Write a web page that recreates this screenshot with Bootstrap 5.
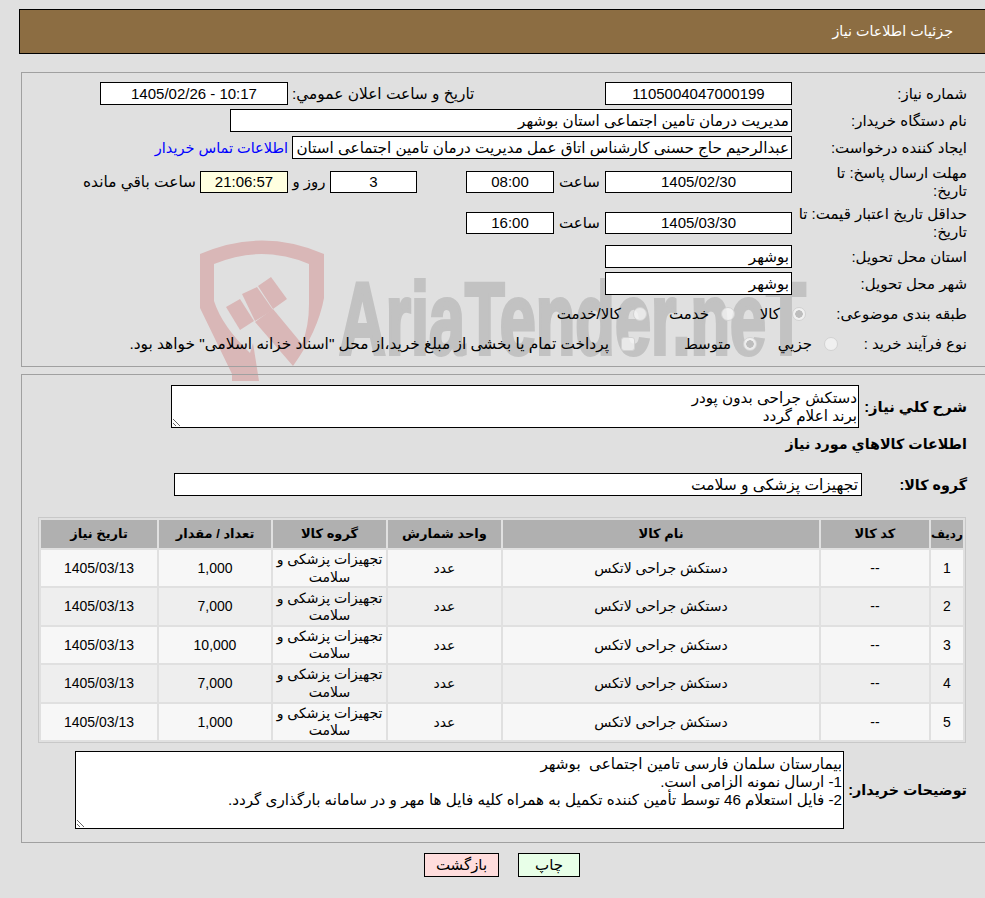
<!DOCTYPE html>
<html lang="fa" dir="rtl">

<head>
    <meta charset="UTF-8">
    <meta name="viewport" content="width=device-width, initial-scale=1">
    <title>جزئیات اطلاعات نیاز</title>
    <link href="https://cdn.jsdelivr.net/npm/bootstrap@5.3.0/dist/css/bootstrap.min.css" rel="stylesheet">
    <style>
        html, body { overflow-x: hidden; }
        body { background: #e0e0e0; color: #000; font: 15px/18px "Liberation Sans", "DejaVu Sans", sans-serif; height: 898px; overflow: hidden; }
        .page-wrap { position: relative; margin-left: 19px; margin-right: -3px; padding-top: 9px; }
        .water-shield { position: absolute; left: -19px; top: -9px; width: 985px; height: 420px; z-index: 0; }
        .water-text { position: absolute; left: 320px; top: 259px; z-index: 0; direction: ltr; color: #c2c2c2; -webkit-text-stroke: 4px #c2c2c2; font: 700 102px/120px "Liberation Sans", sans-serif; transform: scaleX(.635); transform-origin: left top; white-space: nowrap; }
        .head-bar { position: relative; z-index: 1; height: 45px; background: #8c6d42; border: 1px solid #000; color: #fff; font-size: 14.3px; padding: 0 34px; line-height: 43px; margin-bottom: 18px; }
        .box-panel { position: relative; z-index: 1; margin-left: 2px; border: 1px solid #a0a0a0; padding-right: 20px; }
        .panel-one { height: 295px; padding-top: 9px; margin-bottom: 7px; }
        .panel-two { height: 469px; padding-top: 10px; }
        .frm-row { height: 23px; margin-bottom: 4px; }
        .frm-row.tall { height: 30px; }
        .frm-row.opt { height: 20px; }
        .mb-8 { margin-bottom: 8px; }
        .mb-11 { margin-bottom: 11px; }
        .mb-7 { margin-bottom: 7px; }
        .mb-9 { margin-bottom: 9px; }
        .mb-10 { margin-bottom: 10px; }
        .lbl { width: 175px; flex: none; padding-left: 5px; }
        .fld { height: 23px; background: #fff; border: 1px solid #000; padding: 0 2px; line-height: 21px; flex: none; white-space: nowrap; overflow: hidden; font-size: 15.2px; }
        .fld.mid { text-align: center; font-size: 15px; }
        .fld-s { height: 22px; line-height: 20px; }
        .fld-group { font-size: 15.5px; padding: 0 3px; }
        .w187 { width: 187px; }
        .w188 { width: 188px; }
        .w88 { width: 88px; }
        .w87 { width: 87px; }
        .w562 { width: 562px; }
        .w500 { width: 500px; }
        .w688 { width: 688px; }
        .yel { background: #ffffe0; }
        .lbl-pub { width: 313px; text-align: left; flex: none; font-size: 15.4px; }
        .hr-lbl { width: 51px; text-align: center; flex: none; }
        .day-gap { margin-right: 49px; }
        .roz-lbl { width: 42px; text-align: center; flex: none; }
        .sec-b { font-size: 14.3px; font-weight: 700; }
        .sec-head { height: 18px; margin: 7px 0 20px; }
        .lbl-a { width: 108px; flex: none; font-size: 14.8px; }
        .lbl-c { width: 105px; flex: none; }
        .lbl-d { width: 123px; flex: none; }
        .opt-l1 { width: 161px; flex: none; }
        .opt-l2 { width: 129px; flex: none; }
        .cell-71 { width: 71px; flex: none; }
        .cell-88 { width: 88px; flex: none; }
        .cell-81 { width: 81px; flex: none; }
        .cell-122 { width: 122px; flex: none; }
        .wide-t { font-size: 15.4px; }
        .rad { appearance: none; width: 14px; height: 14px; margin: 0; border: 1px solid #d2d2d2; border-radius: 50%; background: rgba(245, 245, 245, .75); flex: none; }
        .rad.on { background: radial-gradient(circle, #bdbdbd 0 3.5px, rgba(245, 245, 245, .8) 4px); }
        .chk { border-radius: 3px; }
        .form-control.note-area { direction: rtl; border: 1px solid #000; border-radius: 0; background: #fff; color: #000; font: inherit; font-size: 15.2px; padding: 3px 1px; box-shadow: none; flex: none; }
        .note-a { width: 688px; height: 43px; min-height: 0; }
        .note-b { width: 769px; height: 78px; min-height: 0; }
        .group-row { margin-bottom: 21px; }
        .items-tbl { table-layout: fixed; width: 928px; border-collapse: separate; border-spacing: 2px; border: 1px solid #c8c8c8; margin: 0 1px 0 0; text-align: center; font-size: 14px; }
        .items-tbl th { background: #b0b0b0; height: 28px; font-size: 13px; font-weight: 700; padding: 0; }
        .items-tbl th.th-small { font-size: 12px; }
        .items-tbl td { background: #f7f7f7; height: 36.4px; padding: 1px 0 0; line-height: 17.5px; vertical-align: middle; }
        .items-tbl tr:nth-child(even) td { background: #eeeeee; }
        .c-a { width: 32px; } .c-b { width: 108px; } .c-c { width: 316px; } .c-d { width: 113px; }
        .c-e { width: 113px; } .c-f { width: 112px; } .c-g { width: 116px; }
        .desc-row { margin-top: 8px; }
        .act-btn { border: 1px solid #000; border-radius: 0; color: #000; height: 24px; padding: 0; font: inherit; }
        .btn-back { width: 75px; background: #ffdddd; }
        .btn-print { width: 62px; background: #e8ffe8; }
        .foot-btns { gap: 19px; margin-top: 10px; padding-right: 3px; }
        a.buyer-link { color: #0000ff; text-decoration: none; font-size: 14.5px; }
    </style>
</head>

<body>
    <div class="page-wrap">
        <!-- واترمارک پشت فرم -->
        <svg class="water-shield" viewBox="0 0 985 420" aria-hidden="true">
            <g fill="#d9b7b7">
                <path d="M232 390V383L200 317V263Q262 236 324 263V307Q318 340 293 375L255 331 273 318 302 353Q309 335 309 313V273Q262 253 214 273V310Q222 335 250 362L253 352 259 390Z"/>
                <path d="M226 316L240 308 254 330 240 339Z"/>
                <path d="M242 303L257 296 273 319 255 330Z"/>
                <path d="M258 295L271 286 287 308 273 318Z"/>
            </g>
        </svg>
        <div class="water-text">AriaTender.neT</div>

        <div class="head-bar">جزئیات اطلاعات نیاز</div>

        <div class="box-panel panel-one">
            <div class="d-flex align-items-center frm-row">
                <div class="lbl">شماره نیاز:</div>
                <div class="fld mid w187">1105004047000199</div>
                <div class="lbl-pub">تاریخ و ساعت اعلان عمومي:</div>
                <div class="fld mid w188 me-1" dir="ltr">1405/02/26 - 10:17</div>
            </div>
            <div class="d-flex align-items-center frm-row">
                <div class="lbl">نام دستگاه خریدار:</div>
                <div class="fld w562">مدیریت درمان تامین اجتماعی استان بوشهر</div>
            </div>
            <div class="d-flex align-items-center frm-row mb-8">
                <div class="lbl">ایجاد کننده درخواست:</div>
                <div class="fld w500">عبدالرحیم حاج حسنی کارشناس اتاق عمل مدیریت درمان تامین اجتماعی استان بوشهر</div>
                <a class="buyer-link me-1" href="#">اطلاعات تماس خریدار</a>
            </div>
            <div class="d-flex align-items-center frm-row tall mb-11">
                <div class="lbl">مهلت ارسال پاسخ: تا<br>تاریخ:</div>
                <div class="fld fld-s mid w187">1405/02/30</div>
                <div class="hr-lbl">ساعت</div>
                <div class="fld fld-s mid w88">08:00</div>
                <div class="fld fld-s mid w87 day-gap">3</div>
                <div class="roz-lbl">روز و</div>
                <div class="fld fld-s mid w88 yel">21:06:57</div>
                <div class="me-1 wide-t">ساعت باقي مانده</div>
            </div>
            <div class="d-flex align-items-center frm-row tall mb-7">
                <div class="lbl">حداقل تاریخ اعتبار قیمت: تا<br>تاریخ:</div>
                <div class="fld fld-s mid w187">1405/03/30</div>
                <div class="hr-lbl">ساعت</div>
                <div class="fld fld-s mid w88">16:00</div>
            </div>
            <div class="d-flex align-items-center frm-row">
                <div class="lbl">استان محل تحویل:</div>
                <div class="fld w187">بوشهر</div>
            </div>
            <div class="d-flex align-items-center frm-row mb-9">
                <div class="lbl">شهر محل تحویل:</div>
                <div class="fld w187">بوشهر</div>
            </div>
            <div class="d-flex align-items-center frm-row opt mb-10">
                <div class="opt-l1">طبقه بندی موضوعی:</div>
                <div class="cell-71 d-flex align-items-center gap-2"><input type="radio" class="rad on" disabled checked><span class="me-1">کالا</span></div>
                <div class="cell-88 d-flex align-items-center gap-2"><input type="radio" class="rad" disabled><span class="me-1">خدمت</span></div>
                <div class="d-flex align-items-center gap-2"><input type="radio" class="rad" disabled><span class="me-1">کالا/خدمت</span></div>
            </div>
            <div class="d-flex align-items-center frm-row opt">
                <div class="opt-l2">نوع فرآیند خرید :</div>
                <div class="cell-81 d-flex align-items-center gap-2"><input type="radio" class="rad" disabled><span class="me-1">جزیي</span></div>
                <div class="cell-122 d-flex align-items-center gap-2"><input type="radio" class="rad on" disabled checked><span class="me-1">متوسط</span></div>
                <div class="d-flex align-items-center gap-2"><input type="checkbox" class="rad chk" disabled><span class="me-1 wide-t">پرداخت تمام یا بخشی از مبلغ خرید،از محل "اسناد خزانه اسلامی" خواهد بود.</span></div>
            </div>
        </div>

        <div class="box-panel panel-two">
            <div class="d-flex align-items-center">
                <div class="sec-b lbl-a">شرح کلي نیاز:</div>
                <textarea class="form-control note-area note-a" readonly>دستکش جراحی بدون پودر
برند اعلام گردد</textarea>
            </div>
            <div class="sec-b sec-head">اطلاعات کالاهاي مورد نیاز</div>
            <div class="d-flex align-items-center group-row">
                <div class="sec-b lbl-c">گروه کالا:</div>
                <div class="fld fld-group w688">تجهیزات پزشکی و سلامت</div>
            </div>
            <table class="items-tbl">
                <colgroup><col class="c-a"><col class="c-b"><col class="c-c"><col class="c-d"><col class="c-e"><col class="c-f"><col class="c-g"></colgroup>
                <thead>
                    <tr><th class="th-small">رديف</th><th>کد کالا</th><th>نام کالا</th><th>واحد شمارش</th><th>گروه کالا</th><th>تعداد / مقدار</th><th>تاریخ نیاز</th></tr>
                </thead>
                <tbody id="items_body"></tbody>
            </table>
            <div class="d-flex align-items-center desc-row">
                <div class="sec-b lbl-d">توضیحات خریدار:</div>
                <textarea class="form-control note-area note-b" readonly>بیمارستان سلمان فارسی تامین اجتماعی  بوشهر
1- ارسال نمونه الزامی است.
2- فایل استعلام 46 توسط تأمین کننده تکمیل به همراه کلیه فایل ها مهر و در سامانه بارگذاری گردد.</textarea>
            </div>
        </div>

        <div class="d-flex justify-content-center foot-btns">
            <button type="button" class="btn act-btn btn-print">چاپ</button>
            <button type="button" class="btn act-btn btn-back">بازگشت</button>
        </div>
    </div>

    <script src="https://cdn.jsdelivr.net/npm/bootstrap@5.3.0/dist/js/bootstrap.bundle.min.js"></script>
    <script>
        const rows = ["1,000", "7,000", "10,000", "7,000", "1,000"];
        let tableRef = document.getElementById("items_body");
        rows.forEach((qty, i) => {
            let row = document.createElement("tr");
            row.innerHTML = `
                <td>${i + 1}</td>
                <td>--</td>
                <td>دستکش جراحی لاتکس</td>
                <td>عدد</td>
                <td>تجهیزات پزشکی و سلامت</td>
                <td>${qty}</td>
                <td>1405/03/13</td>`;
            tableRef.appendChild(row);
        });
    </script>
</body>

</html>
